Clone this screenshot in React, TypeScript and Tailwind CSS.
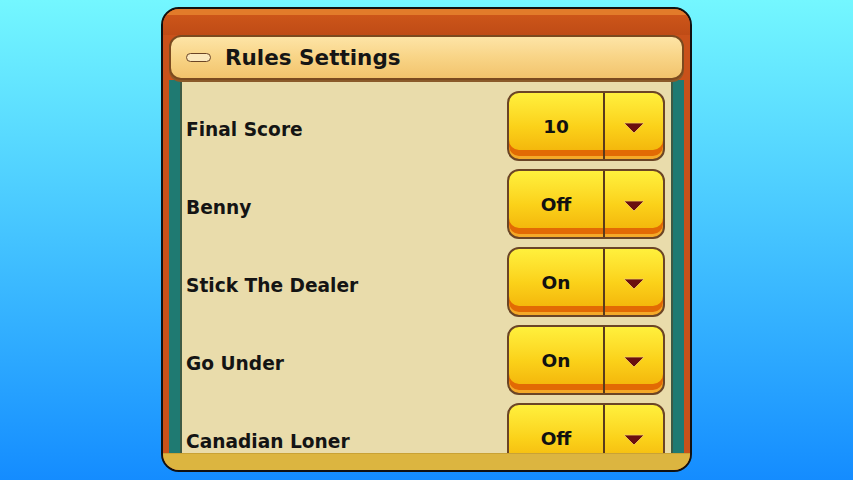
const rules = [
  { label: "Final Score", value: "10" },
  { label: "Benny", value: "Off" },
  { label: "Stick The Dealer", value: "On" },
  { label: "Go Under", value: "On" },
  { label: "Canadian Loner", value: "Off" },
];

function Picker({ value }: { value: string }) {
  return (
    <div className="flex h-[70px] w-[158px] shrink-0 overflow-hidden rounded-[12px] border-2 border-[#6b4526] bg-gradient-to-b from-[#fff03c] via-[#fbd21a] to-[#f1ae05] shadow-[inset_0_-3px_0_#f4a928,inset_0_-9px_0_#e26a04]">
      <div className="flex w-[94px] items-center justify-center pt-[2px] text-[18.5px] font-bold text-[#111]">
        {value}
      </div>
      <div className="w-[2px] bg-[#5a3a1c]" />
      <div className="flex flex-1 items-center justify-center pt-[4px]">
        <svg width="22" height="12" viewBox="0 0 22 12">
          <path d="M1 1 L21 1 L11 11 Z" fill="#6a0f0f" stroke="#f8d060" strokeWidth="0.8" strokeLinejoin="round" />
        </svg>
      </div>
    </div>
  );
}

export default function App() {
  return (
    <div
      className="flex h-[480px] w-full justify-center bg-gradient-to-b from-[#74f7ff] to-[#148cff] pt-[7px]"
      style={{ fontFamily: '"DejaVu Sans", "Liberation Sans", sans-serif' }}
    >
      <div className="flex h-[465px] w-[531px] flex-col overflow-hidden rounded-[18px] border-2 border-[#111] bg-[#c9511a]">
        <div className="h-[26px] shrink-0 border-t-[6px] border-[#e27b2a] bg-gradient-to-b from-[#cc5519] to-[#bf4b16]" />
        <div className="flex min-h-0 flex-1 flex-col px-[6px]">
          <div className="relative z-10 flex h-[45px] shrink-0 items-center gap-[14px] rounded-[12px] border-2 border-[#7b4a1f] bg-gradient-to-b from-[#fde4a6] via-[#f8d486] to-[#f2c36c] pl-[15px] shadow-[0_2px_0_#8a5a2a]">
            <div className="h-[9px] w-[25px] rounded-full border-[1.5px] border-[#6b4526] bg-[#fbe8bd]" />
            <span className="pt-[2px] text-[21.5px] font-bold text-[#151515]">Rules Settings</span>
          </div>
          <div className="flex min-h-0 flex-1 bg-[#1f7a72] px-[11px]">
            <div className="flex min-h-0 flex-1 flex-col gap-[8px] overflow-hidden border-x-2 border-[#3d5a45] bg-[#e9dcab] pl-[4px] pr-[6px] pt-[11px]">
              {rules.map((r) => (
                <div key={r.label} className="flex items-center justify-between">
                  <span className="pt-[8px] text-[18.6px] font-bold text-[#141414]">{r.label}</span>
                  <Picker value={r.value} />
                </div>
              ))}
            </div>
          </div>
        </div>
        <div className="h-[17px] shrink-0 border-t border-[#c9a235] bg-[#dcb540]" />
      </div>
    </div>
  );
}
